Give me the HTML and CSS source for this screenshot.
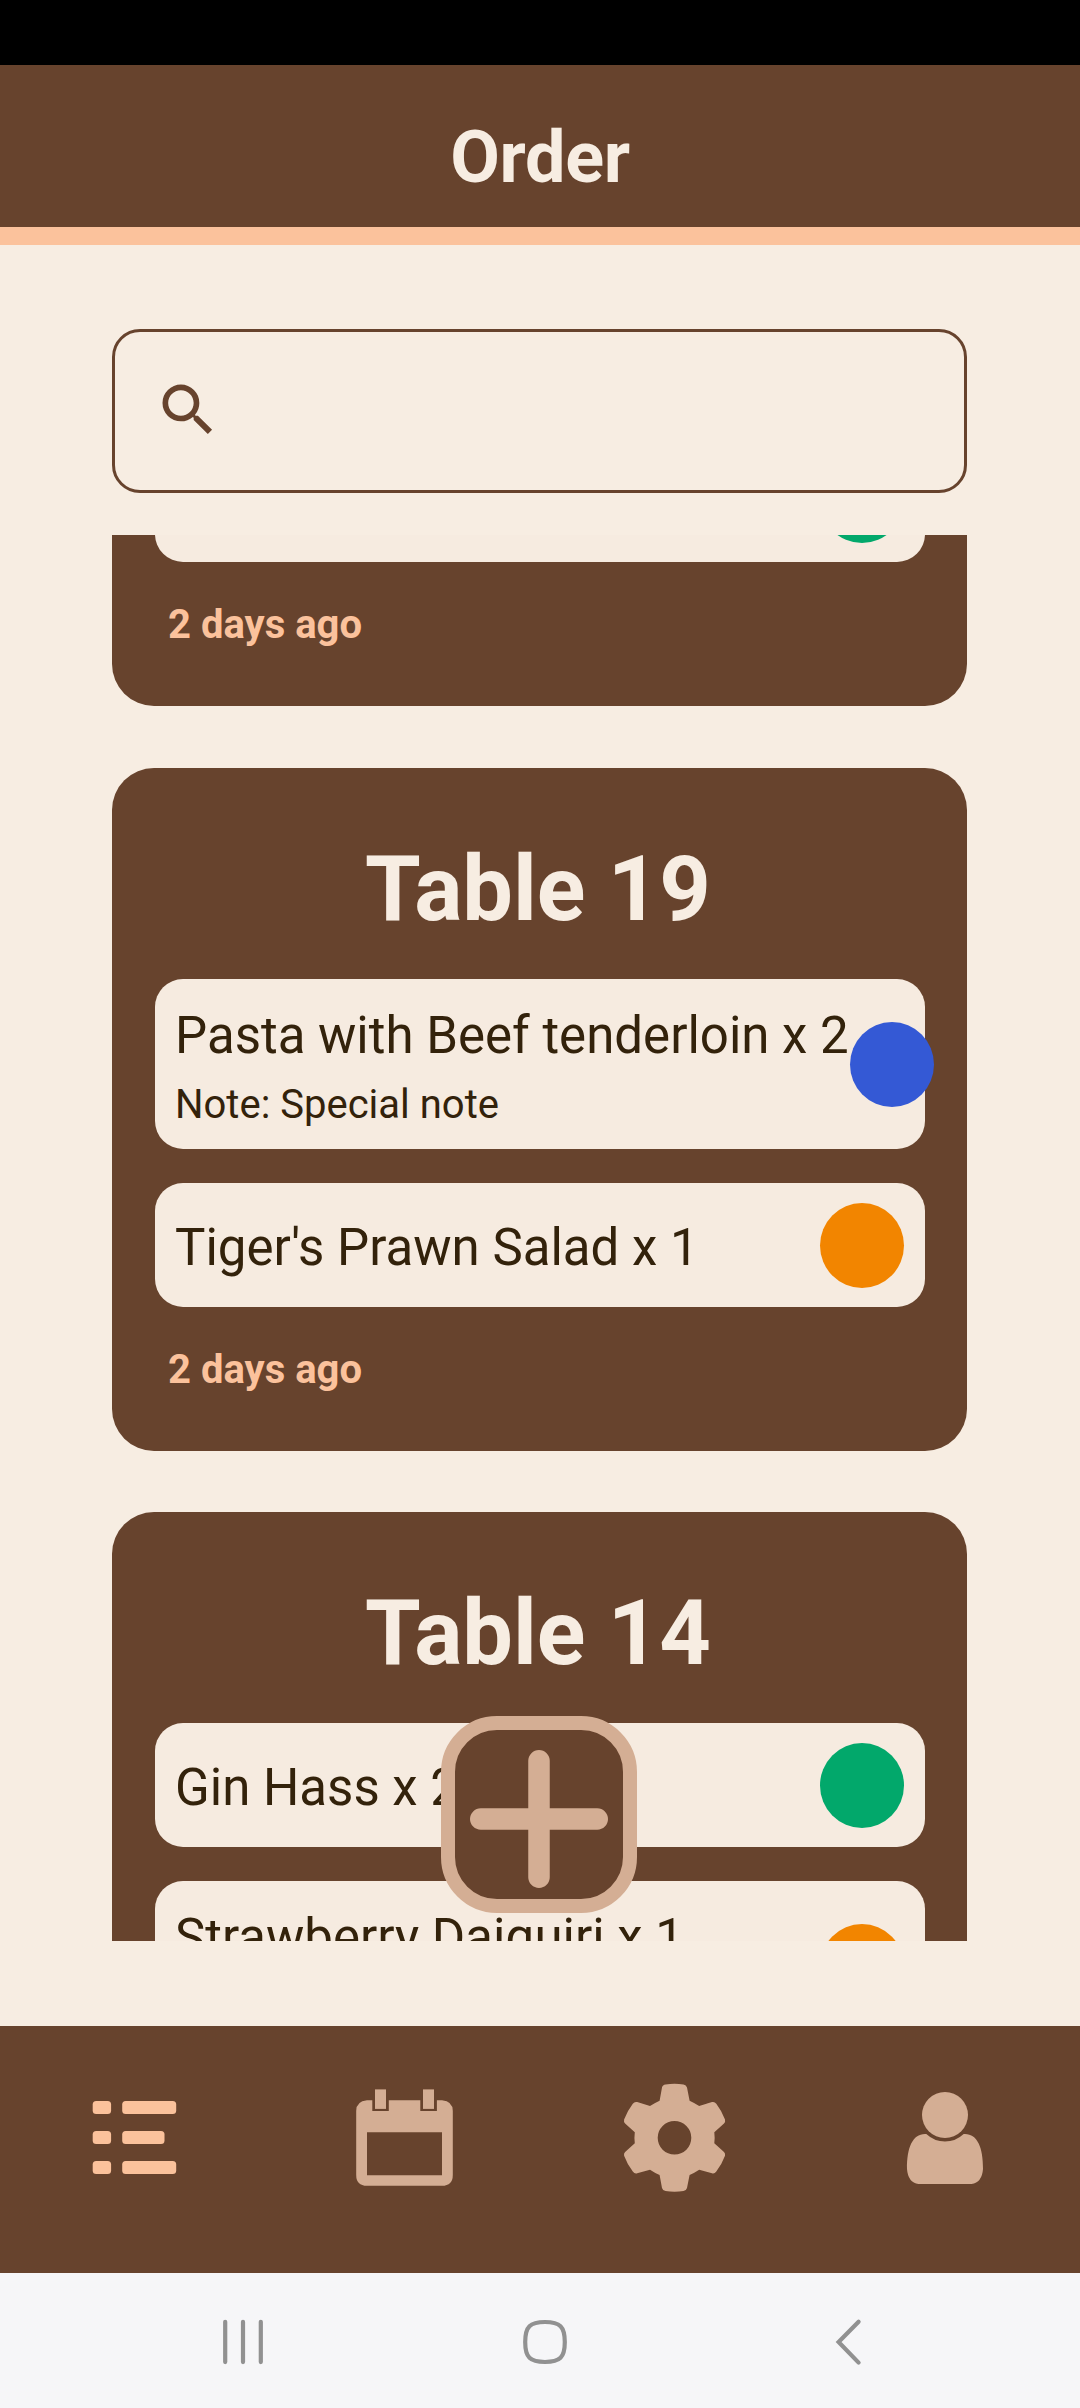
FILE: index.html
```html
<!DOCTYPE html>
<html lang="en">
<head>
<meta charset="utf-8">
<title>Order</title>
<link rel="stylesheet" href="styles.css">
</head>
<body>
<div class="screen">
  <div class="status-bar"></div>
  <header class="header"><h1 class="header-title">Order</h1></header>

  <main class="content">
    <div class="search">
      <svg class="search-icon" viewBox="0 0 24 24"><path d="M15.5 14h-.79l-.28-.27A6.47 6.47 0 0 0 16 9.5 6.5 6.5 0 1 0 9.5 16c1.61 0 3.09-.59 4.23-1.57l.27.28v.79l5 4.99L20.49 19l-4.99-5zm-6 0C7.01 14 5 11.99 5 9.5S7.01 5 9.5 5 14 7.01 14 9.5 11.99 14 9.5 14z"/></svg>
    </div>

    <div class="orders">
      <section class="card card-scrolled">
        <div class="items">
          <div class="item"><span class="dot dot-green"></span></div>
        </div>
        <p class="time">2 days ago</p>
      </section>

      <section class="card">
        <h2 class="card-title">Table 19</h2>
        <div class="items">
          <div class="item item-noted">
            <div class="item-text">
              <p class="item-name">Pasta with Beef tenderloin x 2</p>
              <p class="item-note">Note: Special note</p>
            </div>
            <span class="dot dot-blue"></span>
          </div>
          <div class="item">
            <div class="item-text"><p class="item-name">Tiger's Prawn Salad x 1</p></div>
            <span class="dot dot-orange"></span>
          </div>
        </div>
        <p class="time">2 days ago</p>
      </section>

      <section class="card">
        <h2 class="card-title">Table 14</h2>
        <div class="items">
          <div class="item">
            <div class="item-text"><p class="item-name">Gin Hass x 2</p></div>
            <span class="dot dot-green"></span>
          </div>
          <div class="item item-noted">
            <div class="item-text item-text-top"><p class="item-name">Strawberry Daiquiri x 1</p></div>
            <span class="dot dot-orange"></span>
          </div>
        </div>
      </section>
    </div>

    <button class="add" aria-label="Add order">
      <svg class="add-icon" viewBox="0 0 138 138"><path d="M69 10.75V127.25M10.75 69H127.25"/></svg>
    </button>
  </main>

  <nav class="tabs">
    <a class="tab tab-active">
      <svg class="tab-icon" viewBox="0 0 120 120">
        <rect x="17.7" y="23" width="18.4" height="13" rx="3.5"/><rect x="47.2" y="23" width="54" height="13" rx="3.5"/>
        <rect x="17.7" y="53" width="18.4" height="13" rx="3.5"/><rect x="47.2" y="53" width="42.3" height="13" rx="3.5"/>
        <rect x="17.7" y="83" width="18.4" height="13" rx="3.5"/><rect x="47.2" y="83" width="54" height="13" rx="3.5"/>
      </svg>
    </a>
    <a class="tab">
      <svg class="tab-icon" viewBox="0 0 120 120">
        <path fill-rule="evenodd" d="M22 22.3H27.3V33H43.8V22.3H75.3V33H91.9V22.3H97Q107.8 23.3 107.8 33V97Q107.8 107.8 97 107.8H22Q11.2 107.8 11.2 97V33Q11.2 23.3 22 22.3ZM22 54.3V97.3H97V54.3Z"/>
        <rect x="30" y="11.4" width="11" height="19.5"/><rect x="78" y="11.4" width="11" height="19.5"/>
      </svg>
    </a>
    <a class="tab">
      <svg class="tab-icon" viewBox="0 0 120 120">
        <path fill-rule="evenodd" d="M44.6 22.7L47 9.5Q47.7 6.6 50.5 6.4Q59.5 5.2 68.5 6.4Q71.2 6.6 72 9.5L74.6 22.7Q79.5 25 84.2 28L97 24.1Q99.5 23.3 101.3 25.8Q107 33.3 110 41.6Q110.6 43.8 109 45.5L99.3 54.3Q100 59.7 99.3 65.3L109 74Q110.6 75.5 110 77.8Q107 86 101.3 93.6Q99.5 96.1 97 95.3L84.2 91.7Q79.5 94.8 74.6 97L72 110Q71.2 112.7 68.5 113.1Q59.5 114.2 50.5 113.1Q47.7 112.7 47 110L44.6 97Q39.6 94.8 35 91.7L22.2 95.3Q19.6 96.1 17.8 93.6Q12.1 86 9.1 77.8Q8.5 75.5 10.1 74L19.8 65.3Q19.1 59.7 19.8 54.3L10.1 45.5Q8.5 43.8 9.1 41.6Q12.1 33.3 17.8 25.8Q19.6 23.3 22.2 24.1L35 28Q39.6 25 44.6 22.7ZM59.5 43A16.7 16.7 0 1 0 59.5 76.6A16.7 16.7 0 1 0 59.5 43Z"/>
      </svg>
    </a>
    <a class="tab">
      <svg class="tab-icon" viewBox="0 0 120 120">
        <circle cx="60" cy="37" r="23"/>
        <path d="M41.3 56Q49.5 63.6 60 63.6Q70.5 63.6 78.7 56C92 55 98.2 69 98 91Q97 104.5 86.5 106H33.5Q23 104.5 22 91C21.8 69 28 55 41.3 56Z"/>
      </svg>
    </a>
  </nav>

  <div class="system-bar">
    <svg class="system-icon" viewBox="0 0 60 60"><path stroke-linecap="round" d="M12.2 10.8V51.1M30 10.8V51.1M47.8 10.8V51.1"/></svg>
    <svg class="system-icon" viewBox="0 0 60 60"><path d="M30 11C45 11 49.8 15.5 49.8 31C49.8 46.5 45 51 30 51C15 51 10.2 46.5 10.2 31C10.2 15.5 15 11 30 11Z"/></svg>
    <svg class="system-icon" viewBox="0 0 60 60"><path stroke-linecap="round" d="M41.6 10.8L21.6 31L41.6 51.6"/></svg>
  </div>
</div>
</body>
</html>
```

FILE: styles.css
```css
:root {
  --brown: #67432d;
  --cream: #f7ede2;
  --item: #f6ebe0;
  --peach: #fbc29c;
  --tan: #d4ae94;
  --ink: #33220b;
}

* { box-sizing: border-box; }

body {
  margin: 0;
  font-family: Roboto, "Liberation Sans", sans-serif;
}

h1, h2, p { margin: 0; }

.screen {
  display: flex;
  flex-direction: column;
  width: 1080px;
  height: 2408px;
  overflow: hidden;
  background: var(--cream);
}

.status-bar { height: 65px; background: #000; }

.header {
  height: 180px;
  padding-top: 51px;
  border-bottom: 18px solid var(--peach);
  background: var(--brown);
  color: var(--cream);
  text-align: center;
}

.header-title {
  font-size: 72px;
  line-height: 84px;
  font-weight: 700;
  letter-spacing: -0.3px;
}

.content {
  position: relative;
  height: 1781px;
  padding: 84px 113px 0 112px;
}

.search {
  display: flex;
  align-items: center;
  height: 164px;
  padding-left: 39px;
  border: 3px solid var(--brown);
  border-radius: 28px;
}

.search-icon { width: 68px; height: 68px; margin-bottom: 2px; fill: var(--brown); }

.orders {
  display: flex;
  flex-direction: column;
  gap: 61.5px;
  height: 1406px;
  margin-top: 42px;
  overflow: hidden;
}

.card {
  flex: none;
  padding: 69px 42px 58px 43px;
  border-radius: 42px;
  background: var(--brown);
}

.card-scrolled { margin-top: -165.5px; }

.card-title {
  margin-bottom: 36px;
  padding-right: 4px;
  color: var(--cream);
  font-size: 90px;
  line-height: 106px;
  font-weight: 700;
  text-align: center;
}

.items { display: flex; flex-direction: column; gap: 34.5px; }

.item {
  display: flex;
  align-items: center;
  height: 123.5px;
  padding: 1px 21px 0 20px;
  border-radius: 28px;
  background: var(--item);
  color: var(--ink);
}

.item-noted { height: 170px; }

.item-text { flex: none; padding: 6px 1px 0 0; white-space: nowrap; }

.item-text-top { align-self: flex-start; padding-top: 26px; }

.item-name { font-size: 51px; line-height: 60px; }

.item-note { margin-top: 15px; font-size: 40px; line-height: 47px; }

.dot {
  flex: none;
  width: 84px;
  height: 85px;
  margin-left: auto;
  border-radius: 50%;
}

.dot-green { background: #02a86b; }
.dot-blue { background: #3459d5; }
.dot-orange { background: #f28500; }

.time {
  margin: 39px 0 0 13px;
  color: var(--peach);
  font-size: 40px;
  line-height: 47px;
  font-weight: 700;
}

/* Floats over the order list */
.add {
  position: absolute;
  left: 441px;
  bottom: 113px;
  display: flex;
  align-items: center;
  justify-content: center;
  width: 196px;
  height: 197px;
  padding: 8px 0 0;
  border: 14px solid var(--tan);
  border-radius: 56px;
  background: var(--brown);
}

.add-icon {
  flex: none;
  width: 138px;
  height: 138px;
  stroke: var(--tan);
  stroke-width: 21.5;
  stroke-linecap: round;
}

.tabs {
  display: grid;
  grid-template-columns: repeat(4, 1fr);
  height: 247px;
  padding-top: 52px;
  background: var(--brown);
}

.tab { display: flex; justify-content: center; }

.tab-icon { width: 120px; height: 120px; fill: var(--tan); }

.tab-active .tab-icon { fill: var(--peach); }

.system-bar {
  display: flex;
  justify-content: space-between;
  height: 135px;
  padding: 38px 203px 0 213px;
  background: #f6f6f8;
}

.system-icon {
  width: 60px;
  height: 60px;
  fill: none;
  stroke: #919191;
  stroke-width: 4.2;
}
```
